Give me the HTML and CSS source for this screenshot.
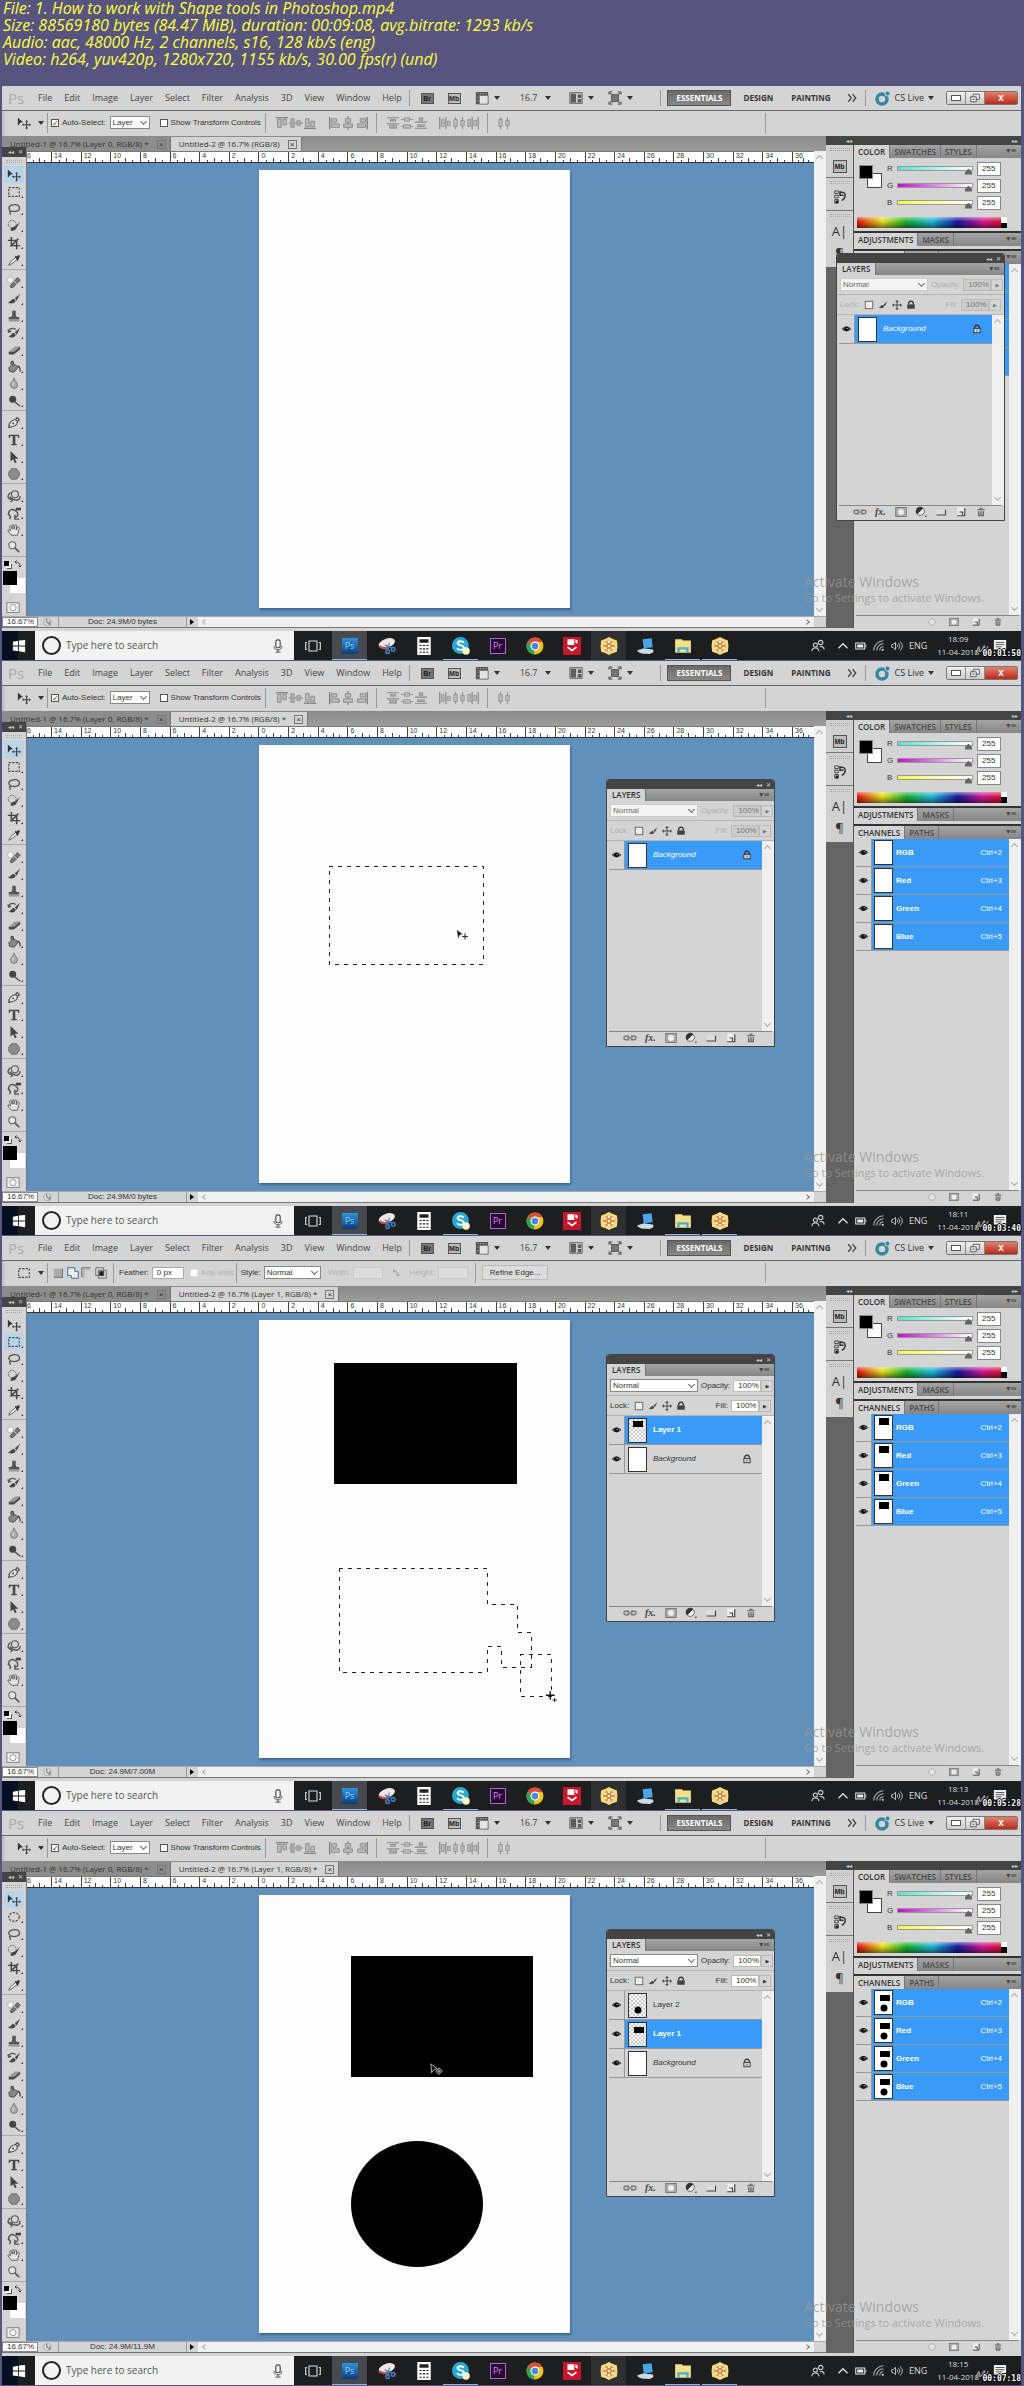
FILE: index.html
```html
<!DOCTYPE html>
<html lang="en">
<head>
<meta charset="utf-8">
<title>How to work with Shape tools in Photoshop</title>
<meta name="viewport" content="width=device-width, initial-scale=1">
<link rel="stylesheet" href="styles.css">
</head>
<body>
<svg class="sprite" aria-hidden="true">
  <defs>
    <pattern id="checker" width="4" height="4" patternUnits="userSpaceOnUse"><rect width="4" height="4" fill="#fff"/><path d="M0 0h2v2H0zM2 2h2v2H2z" fill="#c9c9c9"/></pattern>
  </defs>
  <symbol id="move" viewBox="0 0 16 16"><path d="M1 2l6 5-3 .5L1 11z" fill="#333"/><path d="M11 6v8M7 10h8" stroke="#444" stroke-width="1.4"/><path d="M11 4.500l1.800 2H9.200zM11 15.500l1.800-2H9.200zM5.500 10l2-1.800v3.600zM16 10l-2-1.800v3.600z" fill="#444"/></symbol>
  <symbol id="marquee" viewBox="0 0 16 16"><rect x="2" y="3" width="12" height="10" fill="none" stroke="#444" stroke-width="1.300" stroke-dasharray="2.500 1.500"/></symbol>
  <symbol id="ellipse" viewBox="0 0 16 16"><ellipse cx="8" cy="8" rx="6" ry="5" fill="none" stroke="#444" stroke-width="1.300" stroke-dasharray="2.500 1.500"/></symbol>
  <symbol id="lasso" viewBox="0 0 16 16"><path d="M4 10C0 7 3 3 9 3s7 6 2 7.500-6-1-7.500 0 .5 2 .5 4" fill="none" stroke="#555" stroke-width="1.500"/></symbol>
  <symbol id="quick" viewBox="0 0 16 16"><ellipse cx="6" cy="6" rx="4.500" ry="4.500" fill="none" stroke="#555" stroke-dasharray="2 1"/><path d="M15 3L10 8l-5 2-1 3c3 1 6 0 7-3z" fill="#444"/></symbol>
  <symbol id="crop" viewBox="0 0 16 16"><path d="M5 1v10h10M1 5h10v10M4 12l9-9" fill="none" stroke="#444" stroke-width="1.700"/></symbol>
  <symbol id="dropper" viewBox="0 0 16 16"><path d="M2 14l2-4 6-5 2 2-6 5z" fill="#eee" stroke="#555"/><path d="M9 4l1-1 1 1c2-3 5-1 3 1l-1 2 0 1-1 1z" fill="#333"/></symbol>
  <symbol id="heal" viewBox="0 0 16 16"><rect x="1" y="2" width="6" height="7" rx="3" fill="#f6f6f6" stroke="#999" stroke-width=".6"/><path d="M4 12l8-9 3 3-8 8c-2 1-4 0-3-2z" fill="#777" stroke="#444"/><path d="M8 7l3 3" stroke="#ddd"/></symbol>
  <symbol id="brush" viewBox="0 0 16 16"><path d="M15 2L9 7l2 3zM8 8c-4 0-3 3-7 4 4 2 8 1 9-2z" fill="#484848"/></symbol>
  <symbol id="stamp" viewBox="0 0 16 16"><path d="M6 2h4v5l1 2h3v3H2V9h3l1-2zM2 13h12v1H2z" fill="#555"/></symbol>
  <symbol id="history" viewBox="0 0 16 16"><path d="M15 2L9 7l2 3zM8 8c-3 0-3 3-6 4 4 2 7 1 8-2z" fill="#444"/><path d="M2 7c0-5 5-5 8-3M1 4l1 3 3-1" fill="none" stroke="#555" stroke-width="1.500"/></symbol>
  <symbol id="eraser" viewBox="0 0 16 16"><path d="M2 10l7-6h6l-7 6z" fill="#999"/><path d="M2 10h6v3H2zM8 10l7-6v3l-7 6z" fill="#4c4c4c"/></symbol>
  <symbol id="bucket" viewBox="0 0 16 16"><path d="M2 9l5-5 6 4-5 6-5-1z" fill="#888" stroke="#444"/><path d="M7 6V2c-2-1-3 1-2 3M12 7c3 0 3 3 3 6" fill="none" stroke="#444" stroke-width="1.500"/></symbol>
  <symbol id="drop" viewBox="0 0 16 16"><path d="M8 1c1 4 4 5 4 8a4 4 0 0 1-8 0c0-3 3-4 4-8z" fill="#aaa" stroke="#777"/><path d="M7 6v4" stroke="#eee"/></symbol>
  <symbol id="dodge" viewBox="0 0 16 16"><circle cx="6.500" cy="6" r="4" fill="#444"/><path d="M9 9l6 5" stroke="#555" stroke-width="1.600"/></symbol>
  <symbol id="pen" viewBox="0 0 16 16"><path d="M2 13c0-4 1-8 8-9l2 2c0 5-4 6-10 7zM10 3l2-1 2 2-1 2" fill="#e2e2e2" stroke="#444" stroke-width="1.300"/><circle cx="7" cy="8.500" r="1" fill="#333"/></symbol>
  <symbol id="type" viewBox="0 0 16 16"><path d="M2 2h12v4h-1c0-2-1-2.500-3.500-2.500V12c0 1 1 1 2 1v1h-7v-1c1 0 2 0 2-1V3.500C4 3.500 3 4 3 6H2z" fill="#484848"/></symbol>
  <symbol id="pointer" viewBox="0 0 16 16"><path d="M4 1v12l3-2.500 2 4.500 2-1-2-4h4z" fill="#444"/></symbol>
  <symbol id="shape" viewBox="0 0 16 16"><path d="M5 2h6l3 4v4l-3 4H5l-3-4V6z" fill="#8c8c8c" stroke="#666"/></symbol>
  <symbol id="obj3d" viewBox="0 0 16 16"><circle cx="9" cy="6" r="4" fill="#d4d4d4" stroke="#555" stroke-width="1.300"/><path d="M4 4C0 7 0 12 6 12M3 9l4 3-3 3M8 12c4 2 7 0 7-4" fill="none" stroke="#555" stroke-width="1.600"/></symbol>
  <symbol id="cam3d" viewBox="0 0 16 16"><path d="M4 12C-1 8 4 2 9 5c5 3 4 7 0 8M1 9l3 3-1 3M9 10v5h5" fill="none" stroke="#555" stroke-width="1.600"/><path d="M10 2h6v3h-6z" fill="#444"/></symbol>
  <symbol id="hand" viewBox="0 0 16 16"><path d="M5 14L1 9c0-2 2-1 3 0L3 4c0-1.500 2-1.500 2 0l1 3V3c0-1.500 2-1.500 2 0v4l1-4c.5-1.500 2-1 2 0l-.5 5L12 5c1-1 2 0 2 1l-2 8z" fill="#e4e4e4" stroke="#555"/></symbol>
  <symbol id="zoom" viewBox="0 0 16 16"><circle cx="6" cy="6" r="4" fill="#e4e4e4" stroke="#666" stroke-width="1.300"/><path d="M9 9l5 5" stroke="#555" stroke-width="2"/></symbol>
  <symbol id="mask" viewBox="0 0 16 16"><rect x="1" y="2" width="14" height="11" fill="#eee" stroke="#777"/><circle cx="8" cy="7.500" r="3.500" fill="#fff" stroke="#888"/></symbol>
  <symbol id="swap" viewBox="0 0 16 16"><path d="M3 4c6 0 9 3 9 9M5 1L2 4l3 3M9 11l3 3 3-3" fill="none" stroke="#333" stroke-width="1.800"/></symbol>
  <symbol id="screen" viewBox="0 0 16 16"><path d="M1 1h14v4H5v10H1z" fill="#555"/><path d="M5 5h10v10H5z" fill="#e4e4e4" stroke="#666"/><path d="M3 3h1M6 3h1M9 3h1M12 3h1M3 7h1M3 11h1" stroke="#ddd"/></symbol>
  <symbol id="arrange" viewBox="0 0 16 16"><rect x="1" y="2" width="14" height="12" fill="#ccc" stroke="#555"/><path d="M2 3h6v10H2zM10 4h4v4h-4zM10 9h4v4h-4z" fill="#5c5c5c"/></symbol>
  <symbol id="fullscreen" viewBox="0 0 16 16"><rect x="4" y="4" width="8" height="8" fill="#777" stroke="#555"/><path d="M1 1h4M1 1v3M15 1h-4M15 1v3M1 15h4M1 15v-3M15 15h-4M15 15v-3M2 2l3 3M14 2l-3 3M2 14l3-3M14 14l-3-3" stroke="#666" stroke-width="1.300"/></symbol>
  <symbol id="cslive" viewBox="0 0 16 16"><circle cx="7" cy="9" r="5" fill="none" stroke="#3387a3" stroke-width="3.500"/><circle cx="12.500" cy="3.500" r="2.500" fill="#3387a3" stroke="#d8d8d8"/></symbol>
  <symbol id="more" viewBox="0 0 16 16"><path d="M2 2l5 6-5 6M9 2l5 6-5 6" fill="none" stroke="#444" stroke-width="2"/></symbol>
  <symbol id="restore" viewBox="0 0 16 16"><path d="M5 2h10v8H5z" fill="#eee" stroke="#555" stroke-width="1.500"/><path d="M1 6h9v8H1z" fill="#eee" stroke="#555" stroke-width="1.500"/><path d="M4 9h3v2H4z" fill="#555"/></symbol>
  <symbol id="a-top" viewBox="0 0 16 16"><path d="M1 2h14" stroke="#777" stroke-width="1.400"/><path d="M3 4h4v9H3zM9 4h4v6H9z" fill="#bbb" stroke="#888"/></symbol>
  <symbol id="a-mid" viewBox="0 0 16 16"><path d="M0 8h16" stroke="#888" stroke-width="1.400"/><path d="M2 3h4v10H2zM9 5h4v6H9z" fill="#aaa" stroke="#999"/></symbol>
  <symbol id="a-bot" viewBox="0 0 16 16"><path d="M1 14h14" stroke="#777" stroke-width="1.400"/><path d="M3 3h4v9H3zM9 6h4v6H9z" fill="#bbb" stroke="#888"/></symbol>
  <symbol id="a-left" viewBox="0 0 16 16"><path d="M3 1v14" stroke="#777" stroke-width="1.400"/><path d="M5 3h6v4H5zM5 9h9v4H5z" fill="#bbb" stroke="#888"/></symbol>
  <symbol id="a-cen" viewBox="0 0 16 16"><path d="M8 0v16" stroke="#888" stroke-width="1.400"/><path d="M5 3h6v4H5zM3 9h10v4H3z" fill="#bbb" stroke="#888"/></symbol>
  <symbol id="a-right" viewBox="0 0 16 16"><path d="M14 1v14" stroke="#777" stroke-width="1.400"/><path d="M6 3h6v4H6zM3 9h9v4H3z" fill="#bbb" stroke="#888"/></symbol>
  <symbol id="d-top" viewBox="0 0 16 16"><path d="M1 2h14M1 9h14" stroke="#888" stroke-width="1.400"/><path d="M5 4h6v2H5zM4 11h8v3H4z" fill="#aaa" stroke="#888" stroke-width=".8"/></symbol>
  <symbol id="d-mid" viewBox="0 0 16 16"><path d="M1 4h14M1 12h14" stroke="#999" stroke-width="1.300"/><path d="M5 2h6v4H5zM4 10h8v4H4z" fill="#bbb" stroke="#888" stroke-width=".8"/></symbol>
  <symbol id="d-bot" viewBox="0 0 16 16"><path d="M1 7h14M1 14h14" stroke="#888" stroke-width="1.400"/><path d="M6 2h4v3H6zM4 10h8v2H4z" fill="#aaa" stroke="#888" stroke-width=".8"/></symbol>
  <symbol id="d-left" viewBox="0 0 16 16"><path d="M2 1v14M9 1v14" stroke="#888" stroke-width="1.400"/><path d="M4 4h3v8H4zM11 6h3v5h-3z" fill="#bbb" stroke="#888" stroke-width=".8"/></symbol>
  <symbol id="d-cen" viewBox="0 0 16 16"><path d="M4 1v14M12 1v14" stroke="#999" stroke-width="1.300"/><path d="M2 4h4v8H2zM10 5h4v6h-4z" fill="#bbb" stroke="#888" stroke-width=".8"/></symbol>
  <symbol id="d-right" viewBox="0 0 16 16"><path d="M7 1v14M14 1v14" stroke="#888" stroke-width="1.400"/><path d="M2 4h3v8H2zM9 5h3v6H9z" fill="#bbb" stroke="#888" stroke-width=".8"/></symbol>
  <symbol id="bool" viewBox="0 0 16 16"><path d="M2 3h10v10H2z" fill="#aaa"/><path d="M12 3v10H2" fill="none" stroke="#666"/></symbol>
  <symbol id="bool-add" viewBox="0 0 16 16"><path d="M2 2h8v4h4v8H6v-3H2z" fill="#eee" stroke="#555"/></symbol>
  <symbol id="bool-sub" viewBox="0 0 16 16"><path d="M2 13V2h10v3H6v8z" fill="#bbb"/><path d="M2 13V2h10" fill="none" stroke="#666"/></symbol>
  <symbol id="bool-int" viewBox="0 0 16 16"><path d="M2 2h9v9H2zM5 5h9v9H5z" fill="none" stroke="#666"/><path d="M6 6h5v5H6z" fill="#222"/></symbol>
  <symbol id="hist-panel" viewBox="0 0 16 16"><path d="M2 1h4v3H2zM2 6h4v3H2zM2 11h4v4H2z" fill="#ddd" stroke="#333"/><path d="M3 12h3v3H3z" fill="#222"/><path d="M8 3c7-2 8 5 2 9M8 1v5h4" fill="none" stroke="#333" stroke-width="1.700"/></symbol>
  <symbol id="eye" viewBox="0 0 16 16"><path d="M1 8c3-5 11-5 14 0-3 4-11 4-14 0z" fill="#555"/><circle cx="8" cy="8" r="3.500" fill="#111"/><circle cx="9" cy="7" r="1" fill="#ddd"/></symbol>
  <symbol id="lock" viewBox="0 0 16 16"><path d="M4 7c0-7 8-7 8 0" fill="none" stroke="#333" stroke-width="1.700"/><rect x="3" y="7" width="10" height="7" fill="#ddd" stroke="#333" stroke-width="1.500"/><path d="M8 9v3" stroke="#333" stroke-width="1.500"/></symbol>
  <symbol id="padlock" viewBox="0 0 16 16"><path d="M4 7c0-7 8-7 8 0" fill="none" stroke="#333" stroke-width="2"/><rect x="2" y="7" width="12" height="7" fill="#444"/></symbol>
  <symbol id="pixels" viewBox="0 0 16 16"><rect x="2" y="2" width="12" height="12" fill="#eee" stroke="#555" stroke-width="1.300"/></symbol>
  <symbol id="cross4" viewBox="0 0 16 16"><path d="M8 2v12M2 8h12" stroke="#444" stroke-width="1.500"/><path d="M8 0l3 3H5zM8 16l3-3H5zM0 8l3-3v6zM16 8l-3-3v6z" fill="#444"/></symbol>
  <symbol id="link" viewBox="0 0 16 16"><path d="M7 6H3a2 2 0 0 0 0 4h4M9 6h4a2 2 0 0 1 0 4H9M5 8h6" fill="none" stroke="#777" stroke-width="1.600"/></symbol>
  <symbol id="addmask" viewBox="0 0 16 16"><rect x="1" y="2" width="14" height="12" fill="#aaa" stroke="#666"/><circle cx="8" cy="8" r="4" fill="#eee"/></symbol>
  <symbol id="adjust" viewBox="0 0 16 16"><circle cx="7" cy="7" r="5.500" fill="#eee" stroke="#444"/><path d="M11 3A5.500 5.500 0 1 0 3 11z" fill="#333"/><path d="M13 13h3l-1.500 2z" fill="#222"/></symbol>
  <symbol id="folder" viewBox="0 0 16 16"><path d="M2 4h5l1 1h6v7H2z" fill="#ddd"/><path d="M14 5v7H2" fill="none" stroke="#444" stroke-width="1.500"/></symbol>
  <symbol id="newlayer" viewBox="0 0 16 16"><path d="M3 2h10v11H3z" fill="#eee"/><path d="M13 3v10H3M6 8h4v4" fill="none" stroke="#444" stroke-width="1.600"/></symbol>
  <symbol id="trash" viewBox="0 0 16 16"><path d="M3 5h10M6 3h4M5 7v6h6V7M8 7v5" fill="none" stroke="#555" stroke-width="1.600"/></symbol>
  <symbol id="ring" viewBox="0 0 16 16"><circle cx="8" cy="8" r="5" fill="#e4e4e4" stroke="#777" stroke-dasharray="2 1"/></symbol>
  <symbol id="statusicon" viewBox="0 0 16 16"><circle cx="7" cy="8" r="6" fill="#ddd" stroke="#999"/><path d="M6 3v5l5 4V6" fill="none" stroke="#888" stroke-width="2"/></symbol>
  <symbol id="win" viewBox="0 0 16 16"><path d="M1 3l6-1v5.500H1zM8 1.800L15 1v6.500H8zM1 8.500h6V14l-6-1zM8 8.500h7V15l-7-1z" fill="#fff"/></symbol>
  <symbol id="mic" viewBox="0 0 16 16"><rect x="5.500" y="1" width="5" height="9" rx="2" fill="none" stroke="#444" stroke-width="1.300"/><path d="M3.500 8c0 6 9 6 9 0M8 12v3M5 15h6" fill="none" stroke="#444"/></symbol>
  <symbol id="taskview" viewBox="0 0 16 16"><path d="M4 3h8v10H4zM2 4.500H.700v7H2M14 4.500h1.300v7H14" fill="none" stroke="#ddd" stroke-width="1.100"/></symbol>
  <symbol id="t-snip" viewBox="0 0 16 16"><ellipse cx="8" cy="5.500" rx="7.500" ry="4" fill="#f1e6e6" transform="rotate(-20 8 6)"/><path d="M1 8c3 3 8 2 9 0" stroke="#c0504d" stroke-width="2" fill="none"/><circle cx="8.500" cy="13" r="1.600" fill="none" stroke="#3d84c6" stroke-width="1.300"/><circle cx="13.500" cy="11" r="1.600" fill="none" stroke="#3d84c6" stroke-width="1.300"/><path d="M6 7l7 3M10 5l-1 7" stroke="#3d84c6"/></symbol>
  <symbol id="t-calc" viewBox="0 0 16 16"><path d="M2 0h12v16H2z" fill="#fff"/><path d="M4 2h8v3H4zM4 7h2v1H4zM7 7h2v1H7zM10 7h2v1h-2zM4 10h2v1H4zM7 10h2v1H7zM10 10h2v1h-2zM4 13h2v1H4zM7 13h2v1H7zM10 13h2v1h-2z" fill="#222"/></symbol>
  <symbol id="t-skype" viewBox="0 0 16 16"><circle cx="7.500" cy="7.500" r="7.500" fill="#27a9d4"/><path d="M10.500 5C9 3 5 3.500 5 5.500S10.500 7 10.500 9.500 6 12 4.500 10" fill="none" stroke="#fff" stroke-width="1.700"/><circle cx="12.500" cy="12.500" r="3.300" fill="#fdf6c8"/></symbol>
  <symbol id="t-chrome" viewBox="0 0 16 16"><circle cx="8" cy="8" r="7.500" fill="#f2c313"/><path d="M8 8L1.500 4.300A7.500 7.500 0 0 1 14.500 4.500H8z" fill="#de4a3c"/><path d="M8 8L7 15.500A7.500 7.500 0 0 1 1.400 4.300z" fill="#35a253"/><circle cx="8" cy="8" r="3.500" fill="#4a86e0" stroke="#fff"/></symbol>
  <symbol id="t-red" viewBox="0 0 16 16"><rect width="16" height="16" fill="#c8172a"/><path d="M4 2h6v5H4zM11 2l2 1v3l-2-1z" fill="#fff"/><path d="M4 9l4 3 4-3" stroke="#fff" stroke-width="1.500" fill="none"/></symbol>
  <symbol id="t-gold" viewBox="0 0 16 16"><path d="M8 0l3 1.500 4 1.500.500 5-.500 5-4 1.500L8 16l-3-1.500L1 13 .500 8 1 3l4-1.500z" fill="#f6dc7c"/><circle cx="8" cy="8" r="5" fill="#d7823a"/><g fill="#fbf1cf"><circle cx="8" cy="4.300" r="1.300"/><circle cx="8" cy="11.700" r="1.300"/><circle cx="4.800" cy="6.100" r="1.300"/><circle cx="11.200" cy="6.100" r="1.300"/><circle cx="4.800" cy="9.900" r="1.300"/><circle cx="11.200" cy="9.900" r="1.300"/><circle cx="8" cy="8" r="1.200"/></g></symbol>
  <symbol id="t-net" viewBox="0 0 16 16"><path d="M5 2l8-1 1 8-8 1z" fill="#49a6e6"/><path d="M0 12l6-2 8 1c2 2-1 4-4 4-4 0-8 0-10-3z" fill="#c9dbe8"/></symbol>
  <symbol id="t-files" viewBox="0 0 16 16"><path d="M1 2h6l1 1h7v11H1z" fill="#f6df86"/><path d="M3 9h10v5h-2v-3H5v3H3z" fill="#3fb1d6"/></symbol>
  <symbol id="people" viewBox="0 0 16 16"><circle cx="11" cy="4" r="2.500" fill="none" stroke="#ccc" stroke-width="1.300"/><circle cx="5" cy="7" r="2.300" fill="none" stroke="#ccc" stroke-width="1.300"/><path d="M1 14c0-5 8-5 8 0M10 9c2-1 5 0 5 3" fill="none" stroke="#ccc" stroke-width="1.300"/></symbol>
  <symbol id="caret-up" viewBox="0 0 16 16"><path d="M2 11l6-6 6 6" fill="none" stroke="#ddd" stroke-width="1.800"/></symbol>
  <symbol id="battery" viewBox="0 0 16 16"><rect x="1" y="4" width="12" height="8" fill="none" stroke="#eee" stroke-width="1.300"/><path d="M3 6h8v4H3zM14 6h1v4h-1z" fill="#eee"/></symbol>
  <symbol id="wifi" viewBox="0 0 16 16"><path d="M1 14C1 7 7 1 14 1M5 14c0-5 4-9 9-9M9 14c0-3 2-5 5-5" fill="none" stroke="#aaa" stroke-width="1.500"/><circle cx="13" cy="13" r="1.500" fill="#ccc"/></symbol>
  <symbol id="sound" viewBox="0 0 16 16"><path d="M1 6h2l3-3v10l-3-3H1zM8 6c1 1 1 3 0 4M10 4c2 2 2 6 0 8M12 2c4 3 4 9 0 12" fill="none" stroke="#ccc" stroke-width="1.200"/></symbol>
  <symbol id="notes" viewBox="0 0 16 16"><path d="M1 1h14v11h-4l-2 3v-3H1z" fill="#f2f2f2"/><path d="M3 4h10M3 6.500h10M3 9h7" stroke="#444"/></symbol>
  <symbol id="scrawl" viewBox="0 0 16 16"><path d="M1 15c2-7 4-11 4-6s2 3 4-1 3-3 1 3 4-3 5-5" fill="none" stroke="#999" stroke-width="1.500"/></symbol>
  <symbol id="cursor-move" viewBox="0 0 16 16"><path d="M1 1l8 6-4 1-2 5z" fill="#111" stroke="#ddd" stroke-width=".5"/><path d="M12 6v8M8 10h8" stroke="#333" stroke-width="1.500"/></symbol>
  <symbol id="cursor-light" viewBox="0 0 16 16"><path d="M1 1l8 6-4 1-3 4z" fill="#111" stroke="#ccc"/><path d="M11 6l4 4-4 4-4-4z" fill="#222" stroke="#ccc"/><path d="M11 8v4M9 10h4" stroke="#ccc"/></symbol>
  <symbol id="cursor-plus" viewBox="0 0 16 16"><path d="M6 1v10M1 6h10" stroke="#111" stroke-width="1.500"/><path d="M11 9v5M8.500 11.500h5" stroke="#111"/></symbol>
</svg>

<header class="info">
  <p>File: 1. How to work with Shape tools in Photoshop.mp4</p>
  <p>Size: 88569180 bytes (84.47 MiB), duration: 00:09:08, avg.bitrate: 1293 kb/s</p>
  <p>Audio: aac, 48000 Hz, 2 channels, s16, 128 kb/s (eng)</p>
  <p>Video: h264, yuv420p, 1280x720, 1155 kb/s, 30.00 fps(r) (und)</p>
</header>
<main id="frames"></main>
<script src="frames.js"></script>
</body>
</html>
```
FILE: styles.css
```css
* { box-sizing: border-box; }
body {
  margin: 0;
  background: #57557f;
  color: #333;
  font: 8px/10px "Liberation Sans", Arial, sans-serif;
}
button, input, select { font: inherit; color: inherit; margin: 0; padding: 0; border: 0; border-radius: 0; background: none; }
a { color: inherit; text-decoration: none; }
p, ul { margin: 0; padding: 0; list-style: none; }
svg { display: block; flex: none; }
.sprite { position: absolute; width: 0; height: 0; }
.i8 { width: 8px; height: 8px; }
.i10 { width: 10px; height: 10px; }
.i12 { width: 12px; height: 12px; }
.i14 { width: 14px; height: 14px; }
.i16 { width: 16px; height: 16px; }
.i18 { width: 18px; height: 18px; }

/* file information */
.info {
  min-height: 86px;
  padding: 0 3px;
  color: #ffff3c;
  font: italic 500 16px/17px "Open Sans", "Noto Sans", sans-serif;
}
.info p { white-space: nowrap; }

/* one captured window */
.frame { position: relative; margin: 0 3px 1px 2px; background: #d4d4d4; }
.sep { flex: none; width: 1px; height: 16px; background: #999; }
.down { flex: none; width: 0; height: 0; border: 3px solid transparent; border-top: 4px solid #333; border-bottom: 0; }

/* menu bar */
.menubar { display: flex; align-items: center; height: 25px; padding: 0 3px 0 6px; border-bottom: 1px solid #666; font: 9px/12px "Open Sans", sans-serif; color: #444; }
.logo { width: 30px; font-size: 15px; color: #aaa; }
.menus { display: flex; gap: 12px; }
.menus + .sep { margin: 0 11px 0 7px; }
.tools-a { display: flex; align-items: center; gap: 14px; flex: 1; }
.badge { width: 13px; height: 11px; border: 1px solid #555; background: #777; color: #222; font: bold 7px/9px "Liberation Sans", sans-serif; text-align: center; }
.badge.light { background: #bbb; }
.drop { display: flex; align-items: center; gap: 5px; }
.drop.zoomlevel { gap: 8px; margin: 0 4px 0 6px; }
.spaces { display: flex; align-items: center; font: bold 8px/16px "Open Sans", sans-serif; color: #333; }
.spaces .sep { margin-right: 6px; }
.spaces button { height: 16px; padding: 0 6px; margin-right: 6px; }
.spaces .on { padding: 0 8px; background: linear-gradient(#6a6a6a, #888); border: 1px solid #555; color: #fff; line-height: 14px; }
.spaces .chev { margin: 0 8px 0 4px; padding: 0; }
.spaces .live { display: flex; align-items: center; gap: 4px; font: 9px/12px "Open Sans", sans-serif; padding: 0; margin: 0 12px 0 3px; }
.winbtns { display: flex; border: 1px solid #777; border-radius: 2px; height: 14px; }
.winbtns button { display: flex; align-items: center; justify-content: center; width: 19px; height: 12px; border-right: 1px solid #888; background: linear-gradient(#eee, #ccc); }
.winbtns .min::after { content: ""; width: 8px; height: 4px; background: #fff; border: 1px solid #555; }
.winbtns .close { width: 32px; border: 0; background: linear-gradient(#e08070, #b92a1c); color: #fff; font: bold 10px/12px "Liberation Sans", sans-serif; }

/* options bar */
.options { display: flex; align-items: center; height: 25px; padding: 0 12px 2px; border-left: 3px solid #c4c4c4; }
.options .sep { height: 20px; }
.options .tool { display: flex; align-items: center; gap: 7px; width: 30px; flex: none; }
.options label { display: flex; align-items: center; gap: 3px; white-space: nowrap; }
.options .fields { display: flex; align-items: center; flex: 1; }
.options .end { width: 244px; height: 20px; border-left: 1px solid #999; }
input[type="checkbox"] { appearance: none; display: grid; place-items: center; width: 8px; height: 8px; border: 1px solid #555; background: #fff; }
input[type="checkbox"]:checked::after { content: "✓"; font: 8px/8px "DejaVu Sans", sans-serif; }
input[type="checkbox"]:disabled { border-color: #ddd; }
.select { position: relative; display: flex; align-items: center; flex: none; }
.select select { appearance: none; width: 100%; height: 13px; padding: 0 2px; border: 1px solid #888; background: #fff; }
.select::after { content: ""; position: absolute; right: 4px; top: 3px; width: 4px; height: 4px; border: solid #666; border-width: 0 1px 1px 0; transform: rotate(45deg); }
.select select:disabled { opacity: 1; color: #666; border-color: #ccc; background: #f4f4f4; }
.w40 { width: 40px; }
.w56 { width: 57px; }
.w88 { width: 88px; }
.auto { margin: 0 4px 0 3px; }
.show { margin: 0 4px 0 10px; }
.group { display: flex; margin: 0 1px 0 9px; }
.group + .sep { margin-left: 6px; }
.bools { display: flex; margin: 0 5px 0 4px; }
.bools .on { background: #bcd8f0; }
.field { height: 12px; padding: 0 4px; border: 1px solid #aaa; background: #fff; }
.feather { margin: 0 6px 0 5px; }
.feather .field { width: 32px; }
.dim { color: #b4b4b4; }
.dim .field { width: 30px; background: #ddd; border-color: #ccc; }
.anti { margin-right: 2px; }
.style { margin: 0 7px 0 4px; }
.swap { opacity: .4; }
.options .swap { margin: 0 9px; }
.options .refine { height: 15px; margin-left: 6px; padding: 0 7px; border: 1px solid #bbb; background: #dcdcdc; }
.fields .refine-sep { margin-left: 7px; }

/* document area */
.work { position: relative; display: flex; }
.doc { flex: 1; min-width: 0; display: flex; flex-direction: column; }
.tabs { display: flex; height: 15px; background: linear-gradient(#8a8a8a, #9c9c9c); font-family: "Open Sans", sans-serif; }
.tabs > div { display: flex; align-items: center; gap: 8px; padding: 0 4px 0 8px; margin-top: 1px; border-right: 1px solid #777; background: #8c8c8c; color: #333; white-space: nowrap; }
.tabs > .on { background: #d4d4d4; }
.tabs button { width: 9px; height: 9px; border: 1px solid #777; font: 8px/7px "Liberation Sans", sans-serif; }
.doc-body { display: flex; flex: 1; }
.toolbar { position: relative; flex: none; width: 25px; margin-top: -4px; background: #d4d4d4; border-right: 1px solid #777; }
.bar { display: flex; align-items: center; justify-content: flex-end; gap: 4px; height: 10px; padding: 0 3px; background: #444; color: #ccc; font: bold 6px/8px "DejaVu Sans", sans-serif; }
.grip { height: 3px; margin: 3px 4px 3px; border-top: 1px dotted #aaa; border-bottom: 1px dotted #aaa; }
.tool-group { padding-bottom: 1px; margin-bottom: 3px; border-bottom: 1px solid #aaa; }
.tool-group:last-of-type { border: 0; }
.tool-group button { position: relative; display: grid; place-items: center; width: 20px; height: 17px; margin-left: 2px; }
.tool-group .on { background: #b7d4ea; }
.tool-group .more::after { content: ""; position: absolute; right: 1px; bottom: 2px; border: 1px solid #333; border-top-color: transparent; border-left-color: transparent; }
.mini { display: flex; justify-content: space-between; padding: 0 4px 0 1px; height: 11px; }
.mini .swap { opacity: 1; }
.mini i { width: 5px; height: 5px; margin: 1px; background: #000; box-shadow: 2px 2px #fff, 3px 3px #555; }
.swatches { position: relative; height: 30px; margin-left: 1px; }
.swatches i { position: absolute; left: 7px; top: 7px; width: 15px; height: 15px; background: #fff; }
.swatches i:first-child { z-index: 1; left: 0; top: 0; width: 14px; height: 14px; background: #000; }
.toolbar .quickmask { margin-left: 4px; }

.view { display: flex; flex-direction: column; flex: 1; min-width: 0; }
.ruler { display: flex; height: 12px; background: #fff; border-top: 1px solid #777; border-bottom: 1px solid #333; overflow: hidden; font: 7px/7px "Liberation Sans", sans-serif; color: #333; }
.ruler span { flex: 1; min-width: 0; padding-left: 2px; border-left: 1px solid #444; background:
  linear-gradient(#444, #444) 25% 100% / 1px 2px no-repeat,
  linear-gradient(#444, #444) 50% 100% / 1px 4px no-repeat,
  linear-gradient(#444, #444) 75% 100% / 1px 2px no-repeat; }
.ruler span:first-child { flex: 0 0 24px; border: 0; padding: 0; }
.ruler span:last-child { flex: 0 0 22px; }
.canvas { flex: 1; padding: 7px 0 8px 232px; background: #6190ba; }
.page { position: relative; width: 311px; height: 438px; background: #fdfdfd; box-shadow: 1px 2px 2px #3f6690; }
.page svg { position: absolute; left: 0; top: 0; overflow: visible; }
.ants { fill: none; stroke: #222; stroke-width: 1; stroke-dasharray: 4 5; shape-rendering: crispEdges; }
.scroll { display: flex; flex-direction: column; justify-content: space-between; flex: none; width: 12px; padding: 5px 3px; background: #f0f0f0; }
.scroll i { width: 5px; height: 5px; border: solid #aaa; border-width: 1px 0 0 1px; transform: rotate(45deg); }
.scroll i + i { transform: rotate(225deg); }
.statusbar { display: flex; align-items: center; height: 12px; border-top: 1px solid #aaa; border-bottom: 1px solid #777; }
.statusbar input { width: 36px; height: 10px; padding-left: 4px; background: #fff; border: 1px solid #888; }
.statusbar svg { margin: 0 5px; }
.statusbar p { width: 129px; text-align: center; border-left: 1px solid #999; border-right: 1px solid #999; }
.statusbar .play { margin: 0 4px 0 3px; border: 3px solid transparent; border-left: 4px solid #000; border-right: 0; }
.hscroll { display: flex; align-items: center; justify-content: space-between; flex: 1; height: 10px; padding: 0 5px; margin-right: 12px; background: #f0f0f0; }
.hscroll i { width: 4px; height: 4px; border: solid #aaa; border-width: 0 0 1px 1px; transform: rotate(45deg); }
.hscroll i + i { transform: rotate(225deg); border-color: #777; }

/* dock */
.dock { flex: none; width: 195px; display: flex; flex-direction: column; background: #646464; }
.dock > .bar { justify-content: space-between; padding-left: 20px; height: 9px; }
.dock-body { display: flex; flex: 1; }
.strip { width: 27px; }
.strip div { display: flex; flex-direction: column; align-items: center; gap: 6px; height: 33px; background: #d0d0d0; border-bottom: 1px solid #777; font: 13px/16px "Open Sans", sans-serif; }
.strip div:last-child { height: 56px; border: 0; }
.strip .grip { width: 20px; flex: none; margin: 3px 0 0; }
.strip .badge { width: 14px; height: 13px; margin-top: 3px; line-height: 11px; }
.panels { flex: 1; display: flex; flex-direction: column; background: #d4d4d4; border-left: 1px solid #555; }
.ptabs { display: flex; flex: none; height: 13px; background: linear-gradient(#a4a4a4, #868686); font: 600 8px/13px "Open Sans", sans-serif; color: #4a4a4a; }
.ptabs button { padding: 0 4px; border-right: 1px solid #777; }
.ptabs .on { background: #d4d4d4; color: #333; }
.ptabs::after { content: "▾≡"; margin-left: auto; padding-right: 4px; font: 8px/12px "DejaVu Sans", sans-serif; color: #444; }
.color { display: flex; gap: 4px; padding: 2px 0 0 5px; }
.color .chips { position: relative; width: 24px; height: 54px; }
.chips i { position: absolute; left: 8px; top: 13px; width: 15px; height: 15px; background: #fff; border: 1px solid #444; }
.chips i:first-child { z-index: 1; left: 0; top: 5px; width: 14px; height: 14px; background: #000; border: 1px solid #888; }
.channel-slider { display: flex; align-items: center; height: 17px; gap: 4px; }
.channel-slider > span { width: 6px; }
input[type="range"] { appearance: none; width: 76px; height: 5px; border: 1px solid #999; background: linear-gradient(90deg, #54e6d0, #fff); }
input[type="range"].g { background: linear-gradient(90deg, #c410d0, #fff); }
input[type="range"].b { background: linear-gradient(90deg, #f4fb4a, #fff); }
input[type="range"]::-webkit-slider-thumb { appearance: none; width: 7px; height: 6px; margin-top: 6px; background: #666; clip-path: polygon(50% 0, 100% 60%, 100% 100%, 0 100%, 0 60%); }
.channel-slider .field { width: 24px; height: 14px; border-color: #888; }
.spectrum { flex: none; display: flex; margin: 3px 14px 3px 3px; height: 11px; background: linear-gradient(rgba(255,255,255,.5), rgba(255,255,255,0) 40%, rgba(0,0,0,.5)), linear-gradient(90deg, #e01010, #e8e020 17%, #18b030 33%, #20b8d8 50%, #1818a0 67%, #d01890 84%, #e01010); }
.spectrum i { margin-left: auto; width: 6px; background: linear-gradient(#fff 50%, #000 50%); }
.rule { flex: none; border-top: 2px solid #333; }
.rule.gap { margin-top: 3px; }
.list { display: flex; flex: 1; min-height: 0; }
.rows { flex: 1; margin-left: 2px; }
.rows li { display: flex; align-items: center; height: 28px; border-bottom: 1px solid #999; background: #3a9af8; color: #fff; }
.rows li > svg:first-child { width: 16px; height: 100%; padding: 0 2px; background: #d4d4d4; border-right: 1px solid #999; }
.rows .thumb { width: 19px; height: 25px; margin: 0 3px 0 2px; border: 1px solid #333; background: #fff; }
.rows .name { flex: 1; font-weight: bold; }
.rows .key { padding-right: 7px; }
.pfoot { display: flex; align-items: center; justify-content: flex-end; gap: 12px; flex: none; height: 13px; margin: 0 2px; padding-right: 16px; border-top: 1px solid #888; }

/* floating layers panel */
.layers { position: absolute; left: 604px; top: 68px; display: flex; flex-direction: column; width: 169px; height: 268px; border: 1px solid #444; border-radius: 3px 3px 0 0; background: #d4d4d4; overflow: hidden; }
.layers.docked { left: 834px; top: 117px; }
.layers .bar { height: 9px; }
.layers .ptabs { height: 12px; line-height: 12px; }
.layers .ptabs button { padding: 0 5px; }
.lrow { display: flex; align-items: center; flex: none; height: 20px; padding: 0 3px; gap: 3px; border-bottom: 1px solid #b4b4b4; }
.lrow label { display: flex; align-items: center; gap: 3px; margin-left: auto; }
.pct { display: flex; height: 12px; }
.pct input { width: 28px; padding-left: 4px; background: #fff; border: 1px solid #bbb; }
.pct button { width: 12px; border: 1px solid #bbb; font: 5px/8px "DejaVu Sans", sans-serif; }
.lrow .lock-icons { display: flex; gap: 4px; margin-left: 2px; }
.off .lrow { color: #b0b0b0; }
.off .pct { color: #777; }
.off .pct input { background: #ccc; }
.layers .rows li { height: 29px; background: #d4d4d4; color: #333; }
.layers .rows li.on { background: #3a9af8; color: #fff; }
.layers .thumb { margin: 0 6px 0 3px; }
.layers .rows .name { font-weight: normal; }
.layers .rows .on .name { font-weight: bold; }
.layers .rows .name.bg { font-style: italic; font-weight: normal; }
.layers .rows .lock { margin-right: 10px; }
.layers .pfoot { height: 13px; gap: 8px; margin-bottom: 2px; padding: 0 15px 0 0; }
.fx { width: 12px; font: italic bold 10px/12px "Liberation Serif", serif; color: #444; }

.watermark { position: absolute; right: 39px; bottom: 24px; width: 178px; color: rgba(150, 150, 150, .75); font: 11px/13px "Open Sans", sans-serif; white-space: nowrap; }
.watermark strong { display: block; font: 14px/19px "Open Sans", sans-serif; }
.edge { height: 3px; }

/* taskbar */
.taskbar { position: relative; display: flex; height: 29px; background: #1c1e20; color: #ddd; font: 9px/13px "Open Sans", sans-serif; }
.start { display: grid; place-items: center; width: 33px; background: linear-gradient(90deg, #04101f 50%, #1c1e20 50%); }
.search { display: flex; align-items: center; width: 259px; padding: 0 9px 0 7px; background: #f2f2f2; }
.search::before { content: ""; width: 15px; height: 15px; border: 2px solid #222; border-radius: 50%; }
.search input { flex: 1; min-width: 0; padding-left: 5px; font-size: 10px; }
.search input::placeholder { color: #555; opacity: 1; }
.apps { display: flex; padding-left: 1px; flex: 1; }
.apps button { display: grid; place-items: center; width: 35px; margin-right: 2px; }
.apps button.open { border-bottom: 1px solid #8fb6dd; border-top: 1px solid transparent; }
.apps button.hot { background: #2e2f30; }
.apps button.cur { background: #46494d; }
.square { display: block; width: 16px; height: 16px; font: 9px/15px "Open Sans", sans-serif; color: #8cd0ff; background: linear-gradient(#2f93dd, #0b3e78); }
.square.pr { border: 1px solid #a46bd0; background: #2a0634; color: #d48cf4; line-height: 13px; }
.tray { display: flex; align-items: center; gap: 6px; }
.tray .up { margin-left: 6px; }
.clock { margin: 0 0 2px 4px; text-align: center; font-size: 8px; }
.tray .note { margin: 0 14px 0 -2px; }
.tray .scrawl { margin: 4px 0 0 -10px; }
.stamp { position: absolute; right: 0; bottom: 1px; color: #fff; font: bold 8px/10px "DejaVu Sans Mono", monospace; text-shadow: 1px 0 #000, -1px 0 #000, 0 1px #000, 0 -1px #000; }
```
FILE: frames.js
```js
const frames = [
  { time: '18:09', stamp: '00:01:50', tab: '(RGB/8)', doc: '24.9M/0 bytes', tool: 0, docked: true, layers: ['bg'], art: '' },
  { time: '18:11', stamp: '00:03:40', tab: '(RGB/8) *', doc: '24.9M/0 bytes', tool: 0, layers: ['bg'],
    art: '<rect class="ants" x="70" y="121" width="154" height="98"/><use href="#cursor-move" x="197" y="184" width="12" height="12"/>' },
  { time: '18:13', stamp: '00:05:28', tab: '(Layer 1, RGB/8) *', doc: '24.9M/7.00M', tool: 1, layers: ['1', 'bg'],
    shapes: '<rect x="4" y="2" width="10" height="7"/>',
    art: '<rect x="75" y="43" width="183" height="121"/><path class="ants" d="M80 248H228V284H258V312H272V347H242V326H228V352H80Z"/><rect class="ants" x="261" y="334" width="31" height="42"/><use href="#cursor-plus" x="286" y="370" width="14" height="14"/>' },
  { time: '18:15', stamp: '00:07:18', tab: '(Layer 1, RGB/8) *', doc: '24.9M/11.9M', tool: 0, ellipse: true, layers: ['2', '1', 'bg'],
    shapes: '<rect x="5" y="4" width="10" height="6"/><circle cx="9" cy="17" r="3.500"/>',
    art: '<rect x="92" y="61" width="182" height="121"/><ellipse cx="158" cy="309" rx="66" ry="63"/><use href="#cursor-light" x="171" y="168" width="13" height="13"/>' }
];

const icon = (name, size = 12, cls = '') => `<svg class="i${size} ${cls}" aria-hidden="true"><use href="#${name}"/></svg>`;
const thumb = (content) => `<svg class="thumb" viewBox="0 0 17 23" aria-hidden="true">${content || ''}</svg>`;
const down = '<i class="down"></i>';
const sep = '<i class="sep"></i>';

const menubar = () => `
  <nav class="menubar">
    <span class="logo">Ps</span>
    <div class="menus">${['File', 'Edit', 'Image', 'Layer', 'Select', 'Filter', 'Analysis', '3D', 'View', 'Window', 'Help'].map(m => `<a href="#">${m}</a>`).join('')}</div>
    ${sep}
    <div class="tools-a">
      <button class="badge">Br</button><button class="badge light">Mb</button>
      <button class="drop" aria-label="View extras">${icon('screen', 14)}${down}</button>
      <button class="drop zoomlevel">16.7 ${down}</button>
      <button class="drop" aria-label="Arrange documents">${icon('arrange', 14)}${down}</button>
      <button class="drop" aria-label="Screen mode">${icon('fullscreen', 14)}${down}</button>
    </div>
    <div class="spaces">
      ${sep}<button class="on">ESSENTIALS</button><button>DESIGN</button><button>PAINTING</button>
      <button class="chev" aria-label="More workspaces">${icon('more', 10)}</button>${sep}
      <button class="live">${icon('cslive', 16)}CS Live ${down}</button>
    </div>
    <div class="winbtns"><button class="min" aria-label="Minimize"></button><button aria-label="Restore">${icon('restore', 10)}</button><button class="close" aria-label="Close">x</button></div>
  </nav>`;

const group = (names) => `<div class="group">${names.map(n => icon(n, 14)).join('')}</div>`;

const moveOptions = () => `
  <span class="tool">${icon('move', 14)}${down}</span>${sep}
  <div class="fields">
    <label class="auto"><input type="checkbox" checked>Auto-Select:</label>
    <span class="select w40"><select aria-label="Auto-select target"><option>Layer</option></select></span>
    <label class="show"><input type="checkbox">Show Transform Controls</label>${sep}
    ${group(['a-top', 'a-mid', 'a-bot'])}${group(['a-left', 'a-cen', 'a-right'])}${sep}
    ${group(['d-top', 'd-mid', 'd-bot'])}${group(['d-left', 'd-cen', 'd-right'])}${sep}${group(['d-cen'])}
  </div><span class="end"></span>`;

const marqueeOptions = () => `
  <span class="tool">${icon('marquee', 14)}${down}</span>${sep}
  <div class="fields">
    <div class="bools">${icon('bool', 14)}${icon('bool-add', 14, 'on')}${icon('bool-sub', 14)}${icon('bool-int', 14)}</div>${sep}
    <label class="feather">Feather: <input class="field" value="0 px"></label>
    <label class="dim anti"><input type="checkbox" disabled>Anti-alias</label>${sep}
    <label class="style">Style: <span class="select w56"><select><option>Normal</option></select></span></label>
    <label class="dim">Width: <input class="field" disabled></label>${icon('swap', 8, 'swap')}
    <label class="dim">Height: <input class="field" disabled></label><i class="sep refine-sep"></i>
    <button class="refine">Refine Edge...</button>
  </div><span class="end"></span>`;

const toolGroups = [
  ['move', 'marquee', 'lasso', 'quick', 'crop', 'dropper'],
  ['heal', 'brush', 'stamp', 'history', 'eraser', 'bucket', 'drop', 'dodge'],
  ['pen', 'type', 'pointer', 'shape'],
  ['obj3d', 'cam3d', 'hand', 'zoom']
];

const toolbar = (f) => `
  <aside class="toolbar">
    <div class="bar"><span>◂◂</span><span>✕</span></div><div class="grip"></div>
    ${toolGroups.map((g, gi) => `<div class="tool-group">${g.map((t, i) => {
      const name = t === 'marquee' && f.ellipse ? 'ellipse' : t;
      return `<button class="${t === 'move' || t === 'zoom' ? '' : 'more'} ${gi === 0 && i === f.tool ? 'on' : ''}" aria-label="${name} tool">${icon(name, 14)}</button>`;
    }).join('')}</div>`).join('')}
    <div class="mini"><i></i>${icon('swap', 8, 'swap')}</div>
    <div class="swatches"><i></i><i></i></div>
    ${icon('mask', 14, 'quickmask')}
  </aside>`;

const ruler = () => {
  const labels = ['6'];
  for (let n = -14; n <= 36; n += 2) labels.push(Math.abs(n));
  return `<div class="ruler">${labels.map(l => `<span>${l}</span>`).join('')}</div>`;
};

const slider = (letter, cls) => `
  <div class="channel-slider"><span>${letter}</span><input class="${cls}" type="range" max="255" value="255" aria-label="${letter} level"><input class="field" value="255" aria-label="${letter} value"></div>`;

const dock = (f) => `
  <aside class="dock">
    <div class="bar"><span>◂◂</span><span>▸▸</span></div>
    <div class="dock-body">
      <div class="strip">
        <div><i class="grip"></i><span class="badge light">Mb</span></div>
        <div><i class="grip"></i>${icon('hist-panel', 14)}</div>
        <div><i class="grip"></i><span>A|</span><span>¶</span></div>
      </div>
      <div class="panels">
        <div class="ptabs"><button class="on">COLOR</button><button>SWATCHES</button><button>STYLES</button></div>
        <div class="color"><div class="chips"><i></i><i></i></div><div>${slider('R', 'r')}${slider('G', 'g')}${slider('B', 'b')}</div></div>
        <div class="spectrum"><i></i></div>
        <div class="rule"></div>
        <div class="ptabs"><button class="on">ADJUSTMENTS</button><button>MASKS</button></div>
        <div class="rule gap"></div>
        <div class="ptabs"><button class="on">CHANNELS</button><button>PATHS</button></div>
        <div class="list">
          <ul class="rows">${['RGB', 'Red', 'Green', 'Blue'].map((n, i) => `<li>${icon('eye', 12)}${thumb(f.shapes)}<span class="name">${n}</span><span class="key">Ctrl+${i + 2}</span></li>`).join('')}</ul>
          <div class="scroll"><i></i><i></i></div>
        </div>
        <div class="pfoot">${['ring', 'addmask', 'newlayer', 'trash'].map(n => icon(n, 10)).join('')}</div>
      </div>
    </div>
  </aside>`;

const layerThumbs = {
  bg: () => '',
  1: (f) => `<rect width="17" height="23" fill="url(#checker)"/><rect x="${f.ellipse ? 5 : 4}" y="${f.ellipse ? 4 : 2}" width="10" height="6"/>`,
  2: () => '<rect width="17" height="23" fill="url(#checker)"/><circle cx="9" cy="16" r="3.500"/>'
};

const layersPanel = (f) => {
  const active = f.layers.includes('1') ? '1' : 'bg';
  const off = active === 'bg';
  return `
  <section class="layers ${f.docked ? 'docked' : ''} ${off ? 'off' : ''}">
    <div class="bar"><span>◂◂</span><span>✕</span></div>
    <div class="ptabs"><button class="on">LAYERS</button></div>
    <div class="lrow"><span class="select w88"><select aria-label="Blend mode" ${off ? 'disabled' : ''}><option>Normal</option></select></span>
      <label>Opacity: <span class="pct"><input value="100%"><button tabindex="-1" aria-label="Opacity slider">▶</button></span></label></div>
    <div class="lrow"><span>Lock:</span><span class="lock-icons">${['pixels', 'brush', 'cross4', 'padlock'].map(n => icon(n, 10)).join('')}</span>
      <label>Fill: <span class="pct"><input value="100%"><button tabindex="-1" aria-label="Fill slider">▶</button></span></label></div>
    <div class="list">
      <ul class="rows">${f.layers.map(l => `<li class="${l === active ? 'on' : ''}">${icon('eye', 12)}${thumb(layerThumbs[l](f))}<span class="name ${l === 'bg' ? 'bg' : ''}">${l === 'bg' ? 'Background' : 'Layer ' + l}</span>${l === 'bg' ? icon('lock', 10, 'lock') : ''}</li>`).join('')}</ul>
      <div class="scroll"><i></i><i></i></div>
    </div>
    <div class="pfoot">${icon('link', 14)}<span class="fx">fx.</span>${['addmask', 'adjust', 'folder', 'newlayer', 'trash'].map(n => icon(n, 12)).join('')}</div>
  </section>`;
};

const taskbar = (f) => `
  <footer class="taskbar">
    <button class="start" aria-label="Start">${icon('win', 14)}</button>
    <label class="search"><input placeholder="Type here to search" aria-label="Search">${icon('mic', 14)}</label>
    <div class="apps">
      <button aria-label="Task view">${icon('taskview', 16)}</button>
      <button class="open cur"><span class="square">Ps</span></button>
      <button aria-label="Snipping tool">${icon('t-snip', 18)}</button>
      <button aria-label="Calculator">${icon('t-calc', 18)}</button>
      <button class="open" aria-label="Skype">${icon('t-skype', 18)}</button>
      <button><span class="square pr">Pr</span></button>
      <button aria-label="Chrome">${icon('t-chrome', 18)}</button>
      <button aria-label="Recorder">${icon('t-red', 18)}</button>
      <button class="hot" aria-label="Meeting">${icon('t-gold', 18)}</button>
      <button aria-label="Network">${icon('t-net', 18)}</button>
      <button class="open" aria-label="Explorer">${icon('t-files', 18)}</button>
      <button class="open" aria-label="Meeting window">${icon('t-gold', 18)}</button>
    </div>
    <div class="tray">
      ${icon('people', 14)}${icon('caret-up', 12, 'up')}${icon('battery', 12)}${icon('wifi', 12)}${icon('sound', 12)}
      <span>ENG</span><p class="clock">${f.time}<br>11-04-2018</p>${icon('scrawl', 14, 'scrawl')}${icon('notes', 14, 'note')}
    </div>
    <span class="stamp">${f.stamp}</span>
  </footer>`;

const frame = (f) => `
  <section class="frame">
    ${menubar()}
    <div class="options">${f.tool ? marqueeOptions() : moveOptions()}</div>
    <div class="work">
      <div class="doc">
        <div class="tabs">
          <div>Untitled-1 @ 16.7% (Layer 0, RGB/8) * <button aria-label="Close tab">×</button></div>
          <div class="on">Untitled-2 @ 16.7% ${f.tab} <button aria-label="Close tab">×</button></div>
        </div>
        <div class="doc-body">
          ${toolbar(f)}
          <div class="view">${ruler()}<div class="canvas"><div class="page"><svg width="311" height="438" aria-hidden="true">${f.art}</svg></div></div></div>
          <div class="scroll"><i></i><i></i></div>
        </div>
        <div class="statusbar"><input value="16.67%" aria-label="Zoom">${icon('statusicon', 10)}<p>Doc: ${f.doc}</p><i class="play"></i><div class="hscroll"><i></i><i></i></div></div>
      </div>
      ${dock(f)}
      ${layersPanel(f)}
      <p class="watermark"><strong>Activate Windows</strong>Go to Settings to activate Windows.</p>
    </div>
    <div class="edge"></div>
    ${taskbar(f)}
  </section>`;

document.getElementById('frames').innerHTML = frames.map(frame).join('');
```
